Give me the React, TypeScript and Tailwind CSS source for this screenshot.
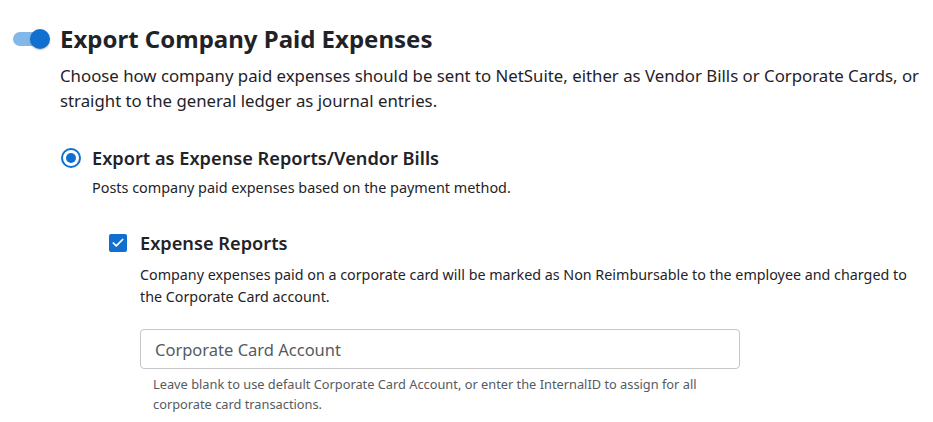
import { Check } from "lucide-react";

// ─── Export settings section ────────────────────────────────────────────────
export default function App() {
  return (
    <div className="min-h-screen bg-white text-[#1f2328]" style={{ fontFamily: '"Noto Sans", sans-serif' }}>
      <div className="pt-[24px] pl-[13px]">
        {/* header + toggle */}
        <div className="flex items-center">
          <div className="relative w-[37px] h-[20px] flex items-center">
            <div className="w-[32px] h-[14px] rounded-full bg-[#82b7ea]" />
            <div className="absolute right-0 top-0 w-[20px] h-[20px] rounded-full bg-[#1170cf] shadow-[0_1px_2px_rgba(0,0,0,0.25)]" />
          </div>
          <h1 className="ml-[10px] text-[24px] leading-[30px] font-bold">
            Export Company Paid Expenses
          </h1>
        </div>

        <p className="ml-[47px] mt-[9px] w-[870px] text-[16.8px] leading-[25px] text-[#1f2328]">
          Choose how company paid expenses should be sent to NetSuite, either as Vendor Bills or Corporate Cards, or
          straight to the general ledger as journal entries.
        </p>

        {/* radio option */}
        <div className="ml-[48px] mt-[33px]">
          <label className="flex items-center gap-[11px]">
            <span className="w-[20px] h-[20px] rounded-full border-[2px] border-[#1170cf] flex items-center justify-center">
              <span className="w-[10px] h-[10px] rounded-full bg-[#1170cf]" />
            </span>
            <span className="text-[18.2px] leading-[24px] font-semibold">Export as Expense Reports/Vendor Bills</span>
          </label>
          <p className="ml-[31px] mt-[8px] text-[14.4px] leading-[20px]">
            Posts company paid expenses based on the payment method.
          </p>

          {/* checkbox option */}
          <div className="ml-[48px] mt-[33px]">
            <label className="flex items-center gap-[13px]">
              <span className="w-[18px] h-[18px] rounded-[2px] bg-[#1170cf] flex items-center justify-center">
                <Check size={14} strokeWidth={3} className="text-white" />
              </span>
              <span className="text-[18.2px] leading-[24px] font-semibold">Expense Reports</span>
            </label>
            <p className="ml-[31px] mt-[9px] w-[775px] text-[14.3px] leading-[22px]">
              Company expenses paid on a corporate card will be marked as Non Reimbursable to the employee and charged to
              the Corporate Card account.
            </p>

            <div className="ml-[31px] mt-[21px]">
              <input
                placeholder="Corporate Card Account"
                className="w-[600px] h-[40px] px-[14px] rounded-[4px] border border-[#c6c6c6] text-[16.5px] placeholder:text-[#555b61] outline-none"
              />
              <p className="ml-[13px] mt-[5px] w-[570px] text-[12.8px] leading-[20px] text-[#555b61]">
                Leave blank to use default Corporate Card Account, or enter the InternalID to assign for all
                corporate card transactions.
              </p>
            </div>
          </div>
        </div>
      </div>
    </div>
  );
}
